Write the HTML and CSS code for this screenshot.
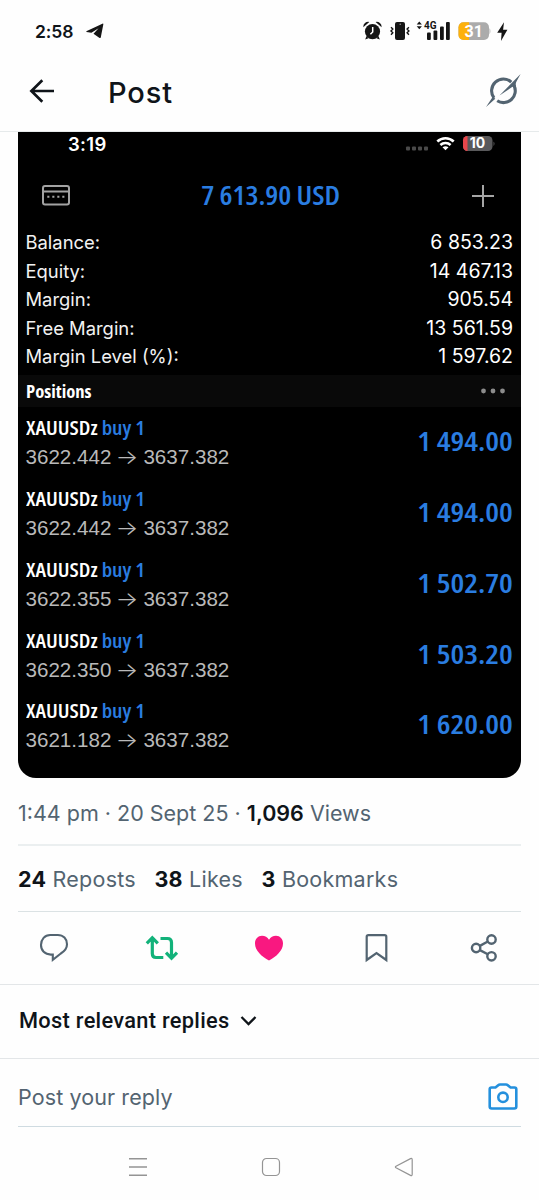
FILE: index.html
```html
<!DOCTYPE html>
<html lang="en">
<head>
<meta charset="utf-8">
<title>Post</title>
<link rel="stylesheet" href="styles.css">
</head>
<body>
<div class="screen">
  <div class="status">
    <span class="status-time">2:58</span>
    <svg class="telegram" width="18" height="16" viewBox="0 0 18 16"><path d="M0.3 8.2 16.4.7Q17.6.3 17.3 1.5L14.8 14.2Q14.4 15.6 13.2 14.8L7.5 10.7 12.6 5.2 5.4 9.8.5 8.9Z" fill="#151515"/></svg>
    <svg class="status-icons" width="150" height="24" viewBox="360 19 150 24">
      <g fill="#151515">
        <circle cx="372.5" cy="31.6" r="7.6"/>
        <path d="M363.3 27.2a5 5 0 0 1 6-5.3ZM381.6 27.2a5 5 0 0 0-6-5.3ZM366.5 36l-1.3 3.5 3.4-1.3ZM378.5 36l1.3 3.5-3.4-1.3Z"/>
        <rect x="395" y="22" width="10" height="18" rx="2"/>
        <path d="M416.7 24.4l2.6-3 2.6 3ZM416.7 26.2l2.6 3 2.6-3Z"/>
        <rect x="427" y="32.4" width="3.8" height="7.6" rx="1"/><rect x="433.5" y="30.4" width="3.8" height="9.6" rx="1"/><rect x="440" y="26.5" width="3.8" height="13.5" rx="1"/><rect x="446" y="22" width="3.8" height="18" rx="1"/>
        <path d="M504 22.3 497.2 32.7H501.6L501 41 507.4 29.8H503.1Z"/>
      </g>
      <path d="M372.7 27v5l-2.3 2.3" fill="none" stroke="#fff" stroke-width="1.5"/>
      <path d="M391 27.3l1.8 1.8-1.8 1.8 1.8 1.8-1.8 2M408.9 27.3l-1.8 1.8 1.8 1.8-1.8 1.8 1.8 2" fill="none" stroke="#151515" stroke-width="1.4"/>
      <circle cx="400.2" cy="24.2" r=".7" fill="#aaa"/>
      <path d="M463.5 22.3H484a5 5 0 0 1 5 5V35a5 5 0 0 1-5 5H463.5a5 5 0 0 1-5-5v-7.7a5 5 0 0 1 5-5Z" fill="#ababab"/>
      <path d="M469 22.3h-5.500a5 5 0 0 0-5 5V35a5 5 0 0 0 5 5H469Z" fill="#fdb10b"/>
      <path d="M489.5 28q1.8 3 0 6.500Z" fill="#ababab"/>
      <text x="424" y="28.5" class="net-label">4G</text>
      <text x="473.8" y="36.7" class="battery-label" text-anchor="middle">31</text>
    </svg>
  </div>
  <header class="topbar">
    <svg class="back" width="26" height="24" viewBox="0 0 26 24"><path d="M13.3 1.3 2.4 12 13.3 22.7M2.6 12H25" fill="none" stroke="#0f1419" stroke-width="2.7"/></svg>
    <h1 class="title">Post</h1>
    <svg class="grok" width="36" height="34" viewBox="0 0 36 34"><g fill="none" stroke="#536471" stroke-width="3.100"><path d="M25.300 8.100A11.800 11.800 0 0 0 8 24"/><path d="M28 11.500A11.800 11.800 0 0 1 11.200 26.800"/></g><path d="M34.600 0 13.500 21.500 26.500 12.800 28.500 13.500 30 12Q29.300 9.500 30.500 7.500ZM0 33 6.800 22.800 9.300 24.800Z" fill="#536471"/></svg>
  </header>
  <main>
    <section class="shot">
      <div class="shot-status">
        <span class="shot-time">3:19</span>
        <svg width="90" height="18" viewBox="405 134 90 18"><g fill="#4a4a4a"><rect x="406" y="146.500" width="4" height="4" rx="1"/><rect x="412" y="146.500" width="4" height="4" rx="1"/><rect x="418" y="146.500" width="4" height="4" rx="1"/><rect x="424" y="146.500" width="4" height="4" rx="1"/></g>
        <g fill="none" stroke="#fff" stroke-width="2.600"><path d="M437.300 141.500a12 12 0 0 1 16.400 0M440.400 145a7.600 7.600 0 0 1 10.200 0"/></g><path d="M442.500 147.300q3-2.200 6 0l-3 3Z" fill="#fff"/>
        <rect x="463" y="136" width="29.500" height="15" rx="4.500" fill="#59595b"/><path d="M467.500 136a4.500 4.500 0 0 0-4.500 4.500v6a4.500 4.500 0 0 0 4.500 4.500Z" fill="#e8464b"/><path d="M493.500 141.500q2 2 0 4.500Z" fill="#59595b"/><text x="477.500" y="148.300" text-anchor="middle" class="shot-battery">10</text></svg>
      </div>
      <div class="shot-head">
        <svg width="28" height="21" viewBox="0 0 28 21"><g fill="none" stroke="#a2a2a2" stroke-width="2"><rect x="1" y="1" width="26" height="18.600" rx="2"/><path d="M1 6.400H27"/></g><path d="M5.300 11.700H22.500" stroke="#a2a2a2" stroke-width="2" stroke-dasharray="2.100 2.900"/></svg>
        <span class="profit">7 613.90 USD</span>
        <svg width="24" height="24" viewBox="0 0 24 24"><path d="M12 1V23M1 12H23" stroke="#a5a5a5" stroke-width="2"/></svg>
      </div>
      <dl class="account">
        <div class="acc-row"><dt>Balance:</dt><dd>6 853.23</dd></div>
        <div class="acc-row"><dt>Equity:</dt><dd>14 467.13</dd></div>
        <div class="acc-row"><dt>Margin:</dt><dd>905.54</dd></div>
        <div class="acc-row"><dt>Free Margin:</dt><dd>13 561.59</dd></div>
        <div class="acc-row"><dt>Margin Level (%):</dt><dd>1 597.62</dd></div>
      </dl>
      <div class="positions-bar"><span class="positions-label">Positions</span>
        <svg width="26" height="6" viewBox="0 0 26 6"><g fill="#8c8c8c"><circle cx="3.500" cy="3" r="2.400"/><circle cx="13" cy="3" r="2.400"/><circle cx="22.500" cy="3" r="2.400"/></g></svg></div>
      <div class="row"><div><div class="sym">XAUUSDz <b>buy 1</b></div><div class="price">3622.442<span class="arrow">→</span>3637.382</div></div><span class="val">1 494.00</span></div>
      <div class="row"><div><div class="sym">XAUUSDz <b>buy 1</b></div><div class="price">3622.442<span class="arrow">→</span>3637.382</div></div><span class="val">1 494.00</span></div>
      <div class="row"><div><div class="sym">XAUUSDz <b>buy 1</b></div><div class="price">3622.355<span class="arrow">→</span>3637.382</div></div><span class="val">1 502.70</span></div>
      <div class="row"><div><div class="sym">XAUUSDz <b>buy 1</b></div><div class="price">3622.350<span class="arrow">→</span>3637.382</div></div><span class="val">1 503.20</span></div>
      <div class="row"><div><div class="sym">XAUUSDz <b>buy 1</b></div><div class="price">3621.182<span class="arrow">→</span>3637.382</div></div><span class="val">1 620.00</span></div>
    </section>
    <div class="meta">1:44 pm · 20 Sept 25 · <b>1,096</b> Views</div>
    <div class="stats"><span><b>24</b> Reposts</span><span><b>38</b> Likes</span><span><b>3</b> Bookmarks</span></div>
    <div class="actions">
      <svg width="30" height="30" viewBox="0 0 30 30"><path d="M11.200 2H18.800C24.300 2 28 5.800 28 11.300C28 15.500 25.500 18.300 21.800 20.500L13.800 26.800V21.600H11.800C5.800 21.600 2 17.500 2 12C2 6.300 5.800 2 11.200 2Z" fill="none" stroke="#536471" stroke-width="2.100"/></svg>
      <svg width="34" height="30" viewBox="0 0 34 30"><path d="M1.800 10.300 7.300 4.700 12.800 10.300M7.300 5.500V20.500Q7.300 24.500 11 24.500H18.300M15.500 5.500H22.500Q26.500 5.500 26.500 9.500V24.500M21 19.700 26.500 25.300 32 19.700" fill="none" stroke="#12b27a" stroke-width="3.200"/></svg>
      <svg width="30" height="30" viewBox="0 0 30 30"><path d="M15 27.500C8 23.800 1 17.800 1 10.500C1 6 4 2.800 8 2.800C11 2.800 13.500 4.300 15 6.700C16.500 4.300 19 2.800 22 2.800C26 2.800 29 6 29 10.500C29 17.800 22 23.800 15 27.500Z" fill="#f91880"/></svg>
      <svg width="30" height="30" viewBox="0 0 30 30"><path d="M4.700 3.800Q4.700 2.100 6.400 2.100H22.600Q24.300 2.100 24.300 3.800V27L14.500 20 4.700 27Z" fill="none" stroke="#536471" stroke-width="2.200"/></svg>
      <svg width="30" height="30" viewBox="0 0 30 30"><g fill="none" stroke="#536471" stroke-width="2.400"><circle cx="6.100" cy="15" r="4.200"/><circle cx="21.500" cy="6.500" r="4.200"/><circle cx="21.500" cy="23.300" r="4.200"/><path d="M9.900 12.900 17.800 8.500M9.900 17.100 17.800 21.200"/></g></svg>
    </div>
    <div class="sort">Most relevant replies<svg width="17" height="12" viewBox="0 0 17 12"><path d="M1.500 2 8.500 9 15.500 2" fill="none" stroke="#0f1419" stroke-width="2.300"/></svg></div>
    <div class="reply"><div class="reply-field">Post your reply
      <svg width="32" height="32" viewBox="0 0 32 32"><g fill="none" stroke="#2490dd" stroke-width="2.600"><path d="M4.500 6.500H8.500L11.200 4.200Q12 3.500 13 3.500H19Q20 3.500 20.800 4.200L23.500 6.500H27.500Q29.300 6.500 29.300 8.300V25.500Q29.300 27.500 27.300 27.500H4.700Q2.700 27.500 2.700 25.500V8.300Q2.700 6.500 4.500 6.500Z"/><circle cx="16" cy="16.300" r="4.700"/></g></svg></div></div>
  </main>
  <nav class="nav"><svg width="20" height="20" viewBox="0 0 20 20"><path d="M1 1.800H19M1 10H19M1 18.200H19" stroke="#949494" stroke-width="1.500"/></svg><svg width="20" height="20" viewBox="0 0 20 20"><rect x="1.500" y="1.500" width="17" height="17" rx="4" fill="none" stroke="#949494" stroke-width="1.200"/></svg><svg width="20" height="20" viewBox="0 0 20 20"><path d="M2 9.200 16.500 1.600Q18.200 1 18.200 2.700V17.300Q18.200 19 16.500 18.400L2 10.800Q.8 10 2 9.200Z" fill="none" stroke="#949494" stroke-width="1.200"/></svg></nav>
</div>
</body>
</html>
```

FILE: styles.css
```css
* {
  box-sizing: border-box;
}

body {
  margin: 0;
  background: #fefefe;
  font-family: Inter, sans-serif;
  color: #0f1419;
}

svg {
  display: block;
  flex: none;
}

.screen {
  width: 539px;
  height: 1200px;
  display: flex;
  flex-direction: column;
}

.status {
  height: 62px;
  display: flex;
  align-items: center;
  padding: 0 29px 0 35px;
}

.status-time {
  font-size: 17.5px;
  font-weight: 600;
  letter-spacing: -0.1px;
}

.telegram {
  margin-left: 13px;
}

.status-icons {
  margin-left: auto;
}

.net-label {
  font: 700 10px Roboto, sans-serif;
  fill: #151515;
}

.battery-label {
  font: 700 16px Roboto, sans-serif;
  fill: #fff;
}

.topbar {
  height: 70px;
  border-bottom: 1px solid #e6eaeb;
  display: flex;
  align-items: center;
  padding: 0 17px 12px 29px;
}

.title {
  margin: 4px auto 0 53px;
  font-size: 29px;
  font-weight: 500;
  letter-spacing: 0.9px;
}

.shot {
  margin: 0 18px;
  height: 646px;
  background: #000;
  color: #fff;
  border-radius: 0 0 18px 18px;
  overflow: hidden;
}

.shot-status {
  height: 24px;
  display: flex;
  justify-content: space-between;
  align-items: center;
  padding: 0 26px 0 50px;
}

.shot-status svg {
  margin-top: -2px;
}

.shot-time {
  font-size: 18.5px;
  font-weight: 600;
  letter-spacing: 0.3px;
}

.shot-battery {
  font: 700 14px Inter, sans-serif;
  fill: #fff;
}

.shot-head {
  height: 72px;
  display: flex;
  align-items: center;
  justify-content: space-between;
  padding: 7px 26px 0 24px;
}

.profit,
.positions-label,
.sym,
.val {
  font-family: "Open Sans", sans-serif;
  font-stretch: 75%;
  font-weight: 600;
}

.profit,
.val {
  font-size: 27px;
  color: #2a7de1;
}

.profit {
  line-height: 40px;
  margin-top: -2px;
  transform: scaleX(1.075);
}

.account {
  margin: 0;
  padding: 0 8px 0 7.5px;
  height: 147px;
}

.acc-row {
  display: flex;
  justify-content: space-between;
  align-items: center;
  height: 28.5px;
  font-size: 19.5px;
}

.acc-row dt {
  font-size: 18.4px;
  color: #f2f2f2;
}

.acc-row dd {
  margin: 0;
}

.positions-bar {
  height: 32px;
  display: flex;
  justify-content: space-between;
  align-items: center;
  padding: 0 15px 0 7.5px;
  background: #090909;
}

.positions-label {
  font-size: 18px;
  font-weight: 700;
  transform: scaleX(1.035);
  transform-origin: left;
}

.row {
  display: flex;
  justify-content: space-between;
  align-items: center;
  height: 70.75px;
  padding: 0 8px 0 7.5px;
}

.sym {
  font-size: 20px;
  line-height: 29px;
  transform: scaleX(1.09);
  transform-origin: left;
}

.sym b {
  font-weight: 600;
  color: #2a7de1;
}

.price {
  font: 20.6px/29px "Liberation Sans", sans-serif;
  color: #b9b9b9;
}

.arrow {
  display: inline-block;
  width: 32px;
  text-align: center;
  font: 300 20px/1 Inter, sans-serif;
  transform: scaleX(1.2);
}

.val {
  margin-top: -3px;
  transform: scaleX(1.14);
  transform-origin: right;
}

.meta {
  height: 68px;
  margin: 0 18px;
  padding-top: 2px;
  line-height: 66px;
  border-bottom: 2px solid #ebeff0;
  font-size: 21.5px;
  color: #536471;
}

.meta b {
  color: #0f1419;
  font-weight: 600;
}

.stats {
  height: 66px;
  margin: 0 18px;
  display: flex;
  gap: 18.5px;
  line-height: 67px;
  border-bottom: 1px solid #dbe2e4;
  font-size: 21.5px;
  letter-spacing: 0.25px;
  color: #536471;
}

.stats b {
  color: #0f1419;
  font-weight: 700;
}

.actions {
  height: 73px;
  display: grid;
  grid-template-columns: repeat(5, 1fr);
  justify-items: center;
  align-items: center;
  border-bottom: 1px solid #e3e6e8;
}

.sort {
  height: 74px;
  display: flex;
  align-items: center;
  gap: 10px;
  padding: 0 19px 2px;
  border-bottom: 1px solid #e3e6e8;
  font: 500 21.8px Roboto, sans-serif;
  letter-spacing: 0.3px;
}

.reply {
  padding: 0 18px;
}

.reply-field {
  height: 68px;
  padding-top: 9px;
  display: flex;
  justify-content: space-between;
  align-items: center;
  border-bottom: 1px solid #cfdbe1;
  font-size: 21.5px;
  letter-spacing: 0.1px;
  color: #536471;
}

.reply-field svg {
  margin-right: 2px;
}

.nav {
  height: 73px;
  display: flex;
  align-items: center;
  justify-content: space-between;
  padding: 7px 125px 0 128px;
}
```
